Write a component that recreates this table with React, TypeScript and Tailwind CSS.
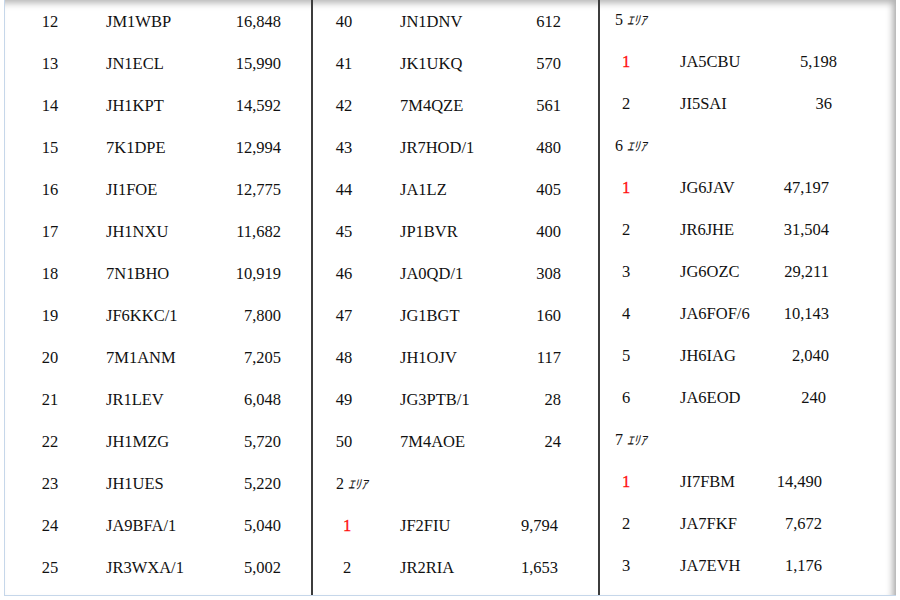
type Row =
  | { kind: "row"; rank: string; call: string; score: string; red?: boolean; rankCls?: string; scoreCls?: string }
  | { kind: "head"; area: string; headCls: string };

const col1: Row[] = [
  ["12", "JM1WBP", "16,848"],
  ["13", "JN1ECL", "15,990"],
  ["14", "JH1KPT", "14,592"],
  ["15", "7K1DPE", "12,994"],
  ["16", "JI1FOE", "12,775"],
  ["17", "JH1NXU", "11,682"],
  ["18", "7N1BHO", "10,919"],
  ["19", "JF6KKC/1", "7,800"],
  ["20", "7M1ANM", "7,205"],
  ["21", "JR1LEV", "6,048"],
  ["22", "JH1MZG", "5,720"],
  ["23", "JH1UES", "5,220"],
  ["24", "JA9BFA/1", "5,040"],
  ["25", "JR3WXA/1", "5,002"],
].map(([rank, call, score]) => ({ kind: "row", rank, call, score }));

const col2: Row[] = [
  ...[
    ["40", "JN1DNV", "612"],
    ["41", "JK1UKQ", "570"],
    ["42", "7M4QZE", "561"],
    ["43", "JR7HOD/1", "480"],
    ["44", "JA1LZ", "405"],
    ["45", "JP1BVR", "400"],
    ["46", "JA0QD/1", "308"],
    ["47", "JG1BGT", "160"],
    ["48", "JH1OJV", "117"],
    ["49", "JG3PTB/1", "28"],
    ["50", "7M4AOE", "24"],
  ].map(([rank, call, score]) => ({ kind: "row" as const, rank, call, score })),
  { kind: "head", area: "2", headCls: "pl-[23px]" },
  { kind: "row", rank: "1", call: "JF2FIU", score: "9,794", red: true, rankCls: "pl-[6px]", scoreCls: "pr-[3px]" },
  { kind: "row", rank: "2", call: "JR2RIA", score: "1,653", rankCls: "pl-[6px]", scoreCls: "pr-[3px]" },
];

const col3: Row[] = [
  { kind: "head", area: "5", headCls: "pl-[15px]" },
  { kind: "row", rank: "1", call: "JA5CBU", score: "5,198", red: true },
  { kind: "row", rank: "2", call: "JI5SAI", score: "36", scoreCls: "pr-[5px]" },
  { kind: "head", area: "6", headCls: "pl-[15px]" },
  { kind: "row", rank: "1", call: "JG6JAV", score: "47,197", red: true, scoreCls: "pr-[8px]" },
  { kind: "row", rank: "2", call: "JR6JHE", score: "31,504", scoreCls: "pr-[8px]" },
  { kind: "row", rank: "3", call: "JG6OZC", score: "29,211", scoreCls: "pr-[8px]" },
  { kind: "row", rank: "4", call: "JA6FOF/6", score: "10,143", scoreCls: "pr-[8px]" },
  { kind: "row", rank: "5", call: "JH6IAG", score: "2,040", scoreCls: "pr-[8px]" },
  { kind: "row", rank: "6", call: "JA6EOD", score: "240", scoreCls: "pr-[11px]" },
  { kind: "head", area: "7", headCls: "pl-[15px]" },
  { kind: "row", rank: "1", call: "JI7FBM", score: "14,490", red: true, scoreCls: "pr-[15px]" },
  { kind: "row", rank: "2", call: "JA7FKF", score: "7,672", scoreCls: "pr-[15px]" },
  { kind: "row", rank: "3", call: "JA7EVH", score: "1,176", scoreCls: "pr-[15px]" },
];

type Widths = { rank: string; call: string; score: string };

function Column({ rows, w, className }: { rows: Row[]; w: Widths; className: string }) {
  return (
    <div className={className}>
      {rows.map((r, i) =>
        r.kind === "head" ? (
          <div key={i} className={`flex h-[42px] items-center ${r.headCls}`}>
            <span className="text-[16px]">{r.area}</span>
            <span className="ml-[4px] text-[13px] italic font-['Noto_Sans_CJK_JP',serif]">ｴﾘｱ</span>
          </div>
        ) : (
          <div key={i} className="flex h-[42px] items-center">
            <div
              className={`${w.rank} shrink-0 text-center ${r.rankCls ?? ""} ${
                r.red ? "text-[#ff1010] [-webkit-text-stroke:0.3px_#ff1010]" : ""
              }`}
            >
              {r.rank}
            </div>
            <div className={`${w.call} shrink-0 whitespace-nowrap`}>{r.call}</div>
            <div className={`${w.score} shrink-0 text-right ${r.scoreCls ?? ""}`}>{r.score}</div>
          </div>
        ),
      )}
    </div>
  );
}

export default function App() {
  return (
    <div className="h-[600px] w-[900px] overflow-hidden bg-white font-['Liberation_Serif',serif] text-[16.5px] text-[#111]">
      <div className="ml-[4px] flex h-[596px] w-[892px] overflow-hidden border-b border-l border-[#c6d7ea] bg-white shadow-[inset_0_9px_7px_-6px_#b4b4b4,inset_-9px_0_7px_-6px_#a8a8a8]">
        <Column
          rows={col1}
          w={{ rank: "w-[90px]", call: "w-[106px] pl-[11px]", score: "w-[80px]" }}
          className="w-[306px] shrink-0 pt-[1px]"
        />
        <div className="w-[2px] shrink-0 bg-[#3c3c3c]" />
        <Column
          rows={col2}
          w={{ rank: "w-[62px]", call: "w-[106px] pl-[25px]", score: "w-[80px]" }}
          className="w-[285px] shrink-0 pt-[1px]"
        />
        <div className="w-[2px] shrink-0 bg-[#3c3c3c]" />
        <Column
          rows={col3}
          w={{ rank: "w-[52px]", call: "w-[105px] pl-[28px]", score: "w-[80px]" }}
          className="-mt-[1px] flex-1"
        />
      </div>
    </div>
  );
}
